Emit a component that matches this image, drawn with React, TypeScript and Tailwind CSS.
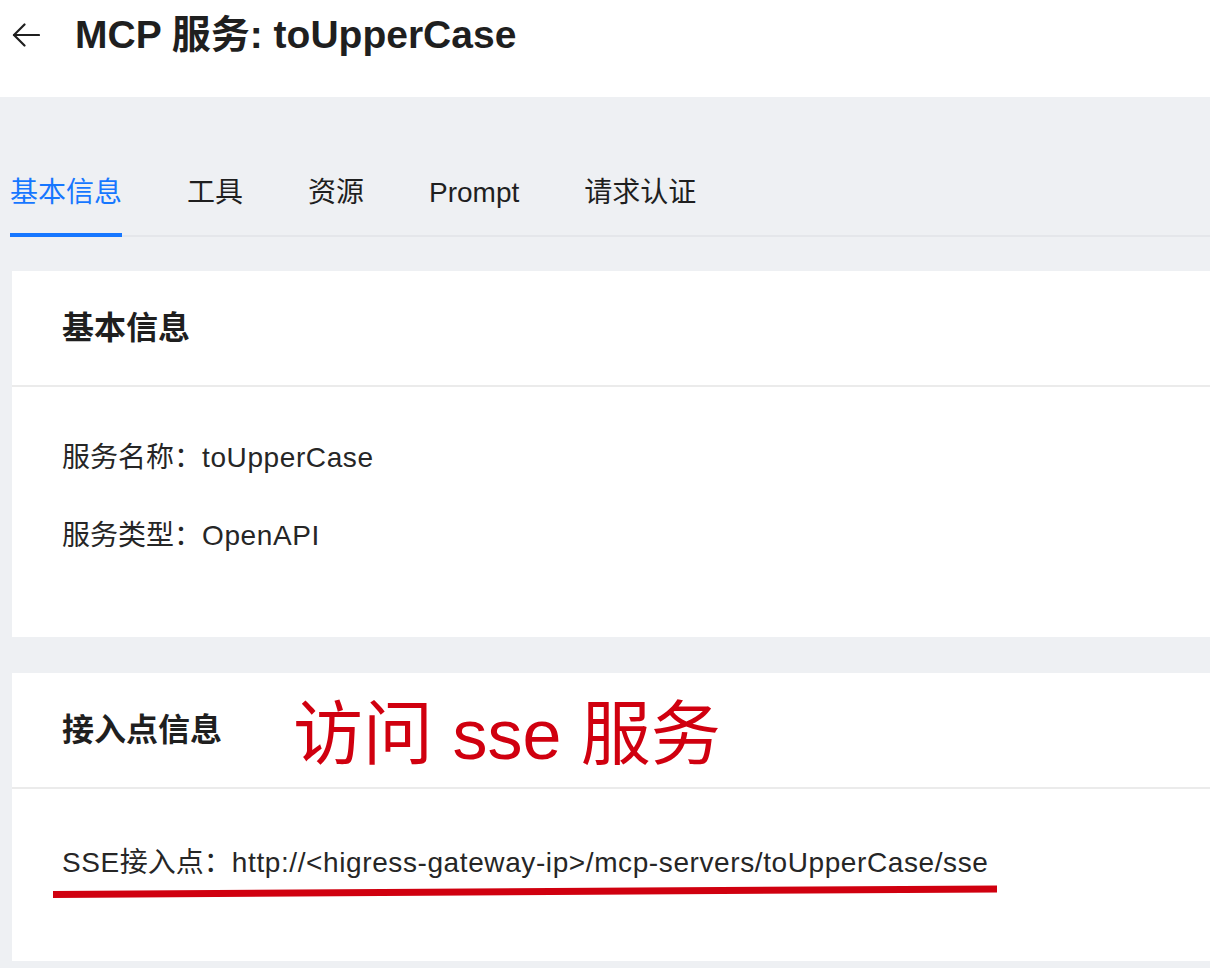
const tabs = ["基本信息", "工具", "资源", "Prompt", "请求认证"];

function BackArrow() {
  return (
    <svg width="28" height="24" viewBox="0 0 28 24" fill="none" stroke="#1f1f1f" strokeWidth="2.2" strokeLinecap="round" strokeLinejoin="round">
      <path d="M27 12H2" />
      <path d="M12.5 1.5L2 12l10.5 10.5" />
    </svg>
  );
}

function Card({ title, children, bodyClass }: { title: string; children: React.ReactNode; bodyClass: string }) {
  return (
    <section className="ml-[2px] bg-white">
      <div className="h-[116px] flex items-center pl-[50px] border-b-2 border-[#ebebeb]">
        <h2 className="text-[32px] font-bold text-[#1f1f1f]">{title}</h2>
      </div>
      <div className={bodyClass}>{children}</div>
    </section>
  );
}

export default function App() {
  return (
    <div
      className="relative min-h-[968px] overflow-hidden bg-[#eef0f3]"
      style={{ fontFamily: '"Liberation Sans", "Noto Sans CJK SC", sans-serif' }}
    >
      <header className="h-[97px] bg-white">
        <div className="h-[70px] flex items-center pl-[12px]">
          <BackArrow />
          <h1 className="ml-[35px] text-[39px] font-bold text-[#1f1f1f]">
            MCP 服务: toUpperCase
          </h1>
        </div>
      </header>

      <main className="pl-[10px] pt-[74px] pb-[6px]">
        <nav className="flex gap-[65px] border-b-2 border-[#e4e6ea]">
          {tabs.map((t, i) => (
            <div
              key={t}
              className={
                i === 0
                  ? "relative h-[64px] pt-[2px] text-[28px] leading-[40px] text-[#1677ff]"
                  : "relative h-[64px] pt-[2px] text-[28px] leading-[40px] text-[#1f1f1f]"
              }
            >
              {t}
              {i === 0 && <div className="absolute left-0 right-0 bottom-[-2px] h-[4px] bg-[#1677ff]" />}
            </div>
          ))}
        </nav>

        <div className="mt-[34px]">
          <Card title="基本信息" bodyClass="h-[250px] pl-[50px] pt-[49px] text-[28px] text-[#262626] tracking-[0.6px]">
            <p className="leading-[44px]">
              <span className="tracking-normal">服务名称：</span>toUpperCase
            </p>
            <p className="mt-[34px] leading-[44px]">
              <span className="tracking-normal">服务类型：</span>OpenAPI
            </p>
          </Card>
        </div>

        <div className="mt-[36px]">
          <Card title="接入点信息" bodyClass="h-[172px] pl-[50px] pt-[52px] text-[28px] text-[#262626] tracking-[0.6px]">
            <p className="leading-[44px]">
              SSE<span className="tracking-normal">接入点：</span>http://&lt;higress-gateway-ip&gt;/mcp-servers/toUpperCase/sse
            </p>
          </Card>
        </div>
      </main>

      {/* red annotations drawn over the screenshot */}
      <div className="absolute left-[293px] top-[695px] text-[70px] leading-[80px] text-[#d0000f] whitespace-nowrap">
        访问 sse 服务
      </div>
      <svg className="absolute left-0 top-0" width="1210" height="968" fill="none">
        <path d="M53 894.5 L997 889" stroke="#d0000f" strokeWidth="7" />
      </svg>
    </div>
  );
}
